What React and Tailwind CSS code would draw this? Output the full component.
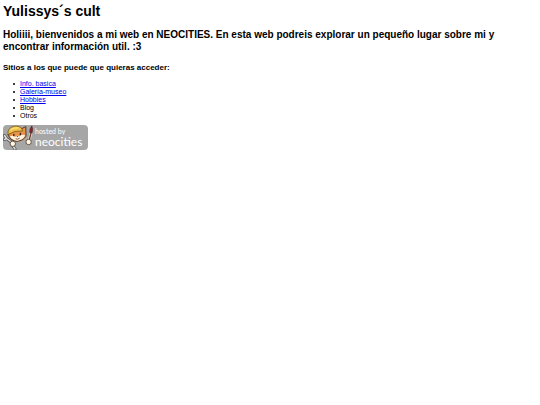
import React from 'react';

const sites = [
  { name: 'Info. basica', href: '#info' },
  { name: 'Galería-museo', href: '#galeria' },
  { name: 'Hobbies', href: '#hobbies' },
  { name: 'Blog' },
  { name: 'Otros' },
];

const Penelope = () => (
  <svg viewBox="0 0 31 25" className="h-[25px] w-[31px] shrink-0" aria-hidden="true">
    {/* wrench on the left, brush on the right */}
    <path d="M1.5 10.5 L3.5 13.5 L9 17.5 M1.5 14.5 L3.5 13.5 M10 21 L12 24" stroke="#4f4f4f" strokeWidth="3" strokeLinecap="round" fill="none" />
    <path d="M1.5 10.5 L3.5 13.5 L9 17.5 M1.5 14.5 L3.5 13.5 M10 21 L12 24" stroke="#dedede" strokeWidth="1.5" strokeLinecap="round" fill="none" />
    <path d="M26 16 L28 8" stroke="#f2e6d8" strokeWidth="2.6" />
    <path d="M26 16 L28 8" stroke="#6b3a2c" strokeWidth="1.3" />
    <path d="M26.8 7.6 Q26.2 4 28.8 0.8 Q30.4 4 29 8 Z" fill="#8a2430" stroke="#4c2220" strokeWidth="0.6" />
    {/* head */}
    <path d="M6 7 L5.6 11 Q8.4 16 14.4 16.4 Q20 15.8 23 11.4 L22.8 1.6 L18 4 Z" fill="#e8924a" stroke="#503014" strokeWidth="0.9" strokeLinejoin="round" />
    <path d="M6.8 11.6 Q9.6 9.8 12 12 Q14.4 9.6 16.4 11.4 Q19 8.8 22.2 10.6 Q20 15.2 14.4 15.7 Q9 15.2 6.8 11.6 Z" fill="#fff6e6" />
    {/* hat */}
    <path d="M5 8.4 Q4.6 3.6 10 1.6 Q15.6 0 18.6 3.4 L19.6 6 Q12 5 4.4 9.8 Z" fill="#efc24a" stroke="#7a5a20" strokeWidth="0.8" strokeLinejoin="round" />
    <path d="M7.4 5 Q11 2.4 15.5 3" stroke="#ffe07a" strokeWidth="1.2" fill="none" />
    {/* face */}
    <ellipse cx="10.8" cy="10" rx="0.8" ry="1.2" fill="#35251c" />
    <ellipse cx="17.4" cy="9" rx="0.8" ry="1.2" fill="#35251c" />
    <path d="M13.4 11.2 L15.4 10.9 L14.6 12.3 Z" fill="#5b2c20" />
    <path d="M12.6 13.8 Q14.8 14.8 16.6 13.2" stroke="#5b2c20" strokeWidth="0.8" fill="none" />
    {/* paws */}
    <circle cx="9.8" cy="18.8" r="2.7" fill="#fff8ec" stroke="#5a4632" strokeWidth="0.9" />
    <circle cx="25.6" cy="17" r="2.7" fill="#fff8ec" stroke="#5a4632" strokeWidth="0.9" />
  </svg>
);

const NeocitiesBadge = () => (
  <a
    href="#neocities"
    className="inline-flex h-[25px] overflow-hidden rounded-[4px] bg-[#a6a6a6] pr-[6px] font-['Lato',sans-serif] text-white"
  >
    <Penelope />
    <span className="flex flex-col pt-[2px] pl-px">
      <span className="text-[7px] leading-[9px]">hosted by</span>
      <span className="text-[12px] leading-3">neocities</span>
    </span>
  </a>
);

const App = () => (
  <main className="min-h-screen bg-white px-[3px] pt-[3px] font-['Liberation_Sans',Arial,sans-serif] text-black">
    <h1 className="text-[14px] leading-4 font-bold">Yulissys´s cult</h1>
    <h2 className="mt-[10px] text-[10px] leading-3 font-bold">
      Holiiii, bienvenidos a mi web en NEOCITIES. En esta web podreis explorar un pequeño lugar sobre mi y
      encontrar información util. :3
    </h2>
    <h3 className="mt-[10px] text-[8px] leading-[9px] font-bold">Sitios a los que puede que quieras acceder:</h3>
    <ul className="mt-2 pl-[10px] text-[7px] leading-2">
      {sites.map((site) => (
        <li key={site.name} className="flex items-center gap-[5px] before:size-[2px] before:rounded-full before:bg-black">
          {site.href ? <a href={site.href} className="text-[#0000ee] underline">{site.name}</a> : site.name}
        </li>
      ))}
    </ul>
    <div className="mt-[5px] flex">
      <NeocitiesBadge />
    </div>
  </main>
);

export default App;
